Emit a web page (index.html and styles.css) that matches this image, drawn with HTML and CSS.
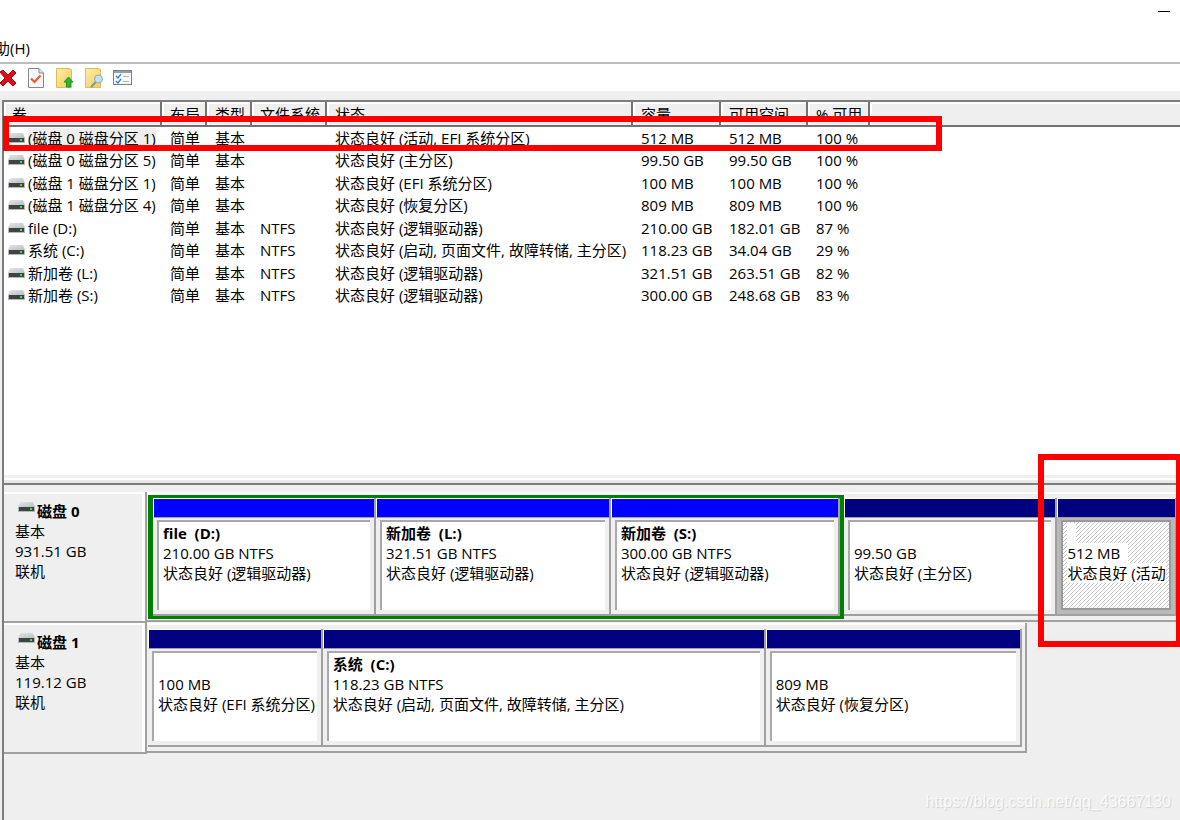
FILE: index.html
```html
<!DOCTYPE html>
<html lang="zh-CN">
<head>
<meta charset="utf-8">
<title>磁盘管理</title>
<link rel="stylesheet" href="styles.css">
</head>
<body>
<svg class="defs" aria-hidden="true">
  <defs>
    <linearGradient id="lid" x1="0" y1="0" x2="1" y2="1"><stop offset="0" stop-color="#e4e6e9"/><stop offset="1" stop-color="#b9bdc3"/></linearGradient>
    <linearGradient id="folder" x1="0" y1="0" x2="1" y2="1"><stop offset="0" stop-color="#ffedab"/><stop offset="1" stop-color="#f2cc58"/></linearGradient>
    <symbol id="drive" viewBox="0 0 17 12">
      <path d="M2 1H15L17 6H0Z" fill="url(#lid)"/>
      <rect y="6" width="17" height="5" fill="#b4b7bb"/>
      <rect x="1" y="6" width="15" height="4" fill="#404244"/>
      <rect x="12" y="7" width="2" height="2" fill="#35e63c"/>
    </symbol>
  </defs>
</svg>
<header class="titlebar"><button class="minimize" aria-label="最小化"></button></header>
<nav class="menubar"><button class="menu">助(H)</button></nav>
<div class="toolbar">
  <button class="tool" aria-label="删除"><svg width="20" height="22" viewBox="0 0 20 22"><path d="M3 5L6 3L11 8L16 3L19 6L14 11L19 16L16 19L11 14L6 19L3 16L8 11Z" fill="#dc1018" stroke="#b5000c"/></svg></button>
  <button class="tool" aria-label="属性"><svg width="20" height="22" viewBox="0 0 20 22"><path d="M2.500 1.500H13L17.500 6V20.500H2.500Z" fill="#f5f7f9" stroke="#85898d"/><path d="M13 1.500V6H17.500" fill="#dfe3e8" stroke="#85898d"/><path d="M5 11.500L8.500 15L14.500 8.500" fill="none" stroke="#f05a28" stroke-width="2.200"/></svg></button>
  <button class="tool" aria-label="向上"><svg width="20" height="22" viewBox="0 0 20 22"><path d="M1.500 1.500H14L16.500 2.500V20.500H1.500Z" fill="url(#folder)" stroke="#dfbd58"/><path d="M13.500 10L18 15H15.500V20H11.500V15H9Z" fill="#2db52d" stroke="#179622"/></svg></button>
  <button class="tool" aria-label="查找"><svg width="20" height="22" viewBox="0 0 20 22"><path d="M1.500 1.500H14L16.500 2.500V20.500H1.500Z" fill="url(#folder)" stroke="#dfbd58"/><path d="M12 15L7 20" stroke="#7993a8" stroke-width="2"/><circle cx="14.500" cy="12" r="4" fill="#bfe2f4" stroke="#8da8bb"/></svg></button>
  <button class="tool" aria-label="视图"><svg width="20" height="22" viewBox="0 0 20 22"><rect x=".5" y="3.500" width="18" height="14" fill="#f7f8f9" stroke="#797f87"/><rect x="1" y="4" width="17" height="2" fill="#979da5"/><path d="M3 9L5 11L8 7M3 14L5 16L8 12" fill="none" stroke="#3083d4" stroke-width="1.300"/><path d="M10 9.500H16M10 14.500H16" stroke="#b0b4b8"/></svg></button>
</div>
<main class="workspace">
  <section class="volumes">
    <table>
      <colgroup><col class="c-name"><col class="c-short"><col class="c-short"><col class="c-fs"><col class="c-status"><col class="c-cap"><col class="c-free"><col class="c-pct"><col></colgroup>
      <thead><tr><th>卷</th><th>布局</th><th>类型</th><th>文件系统</th><th>状态</th><th>容量</th><th>可用空间</th><th>% 可用</th><th></th></tr></thead>
      <tbody>
        <tr><td><div class="name"><svg><use href="#drive"/></svg><span class="picked">(磁盘 0 磁盘分区 1)</span></div></td><td>简单</td><td>基本</td><td></td><td>状态良好 (活动, EFI 系统分区)</td><td>512 MB</td><td>512 MB</td><td>100 %</td><td></td></tr>
        <tr><td><div class="name"><svg><use href="#drive"/></svg><span>(磁盘 0 磁盘分区 5)</span></div></td><td>简单</td><td>基本</td><td></td><td>状态良好 (主分区)</td><td>99.50 GB</td><td>99.50 GB</td><td>100 %</td><td></td></tr>
        <tr><td><div class="name"><svg><use href="#drive"/></svg><span>(磁盘 1 磁盘分区 1)</span></div></td><td>简单</td><td>基本</td><td></td><td>状态良好 (EFI 系统分区)</td><td>100 MB</td><td>100 MB</td><td>100 %</td><td></td></tr>
        <tr><td><div class="name"><svg><use href="#drive"/></svg><span>(磁盘 1 磁盘分区 4)</span></div></td><td>简单</td><td>基本</td><td></td><td>状态良好 (恢复分区)</td><td>809 MB</td><td>809 MB</td><td>100 %</td><td></td></tr>
        <tr><td><div class="name"><svg><use href="#drive"/></svg><span>file (D:)</span></div></td><td>简单</td><td>基本</td><td>NTFS</td><td>状态良好 (逻辑驱动器)</td><td>210.00 GB</td><td>182.01 GB</td><td>87 %</td><td></td></tr>
        <tr><td><div class="name"><svg><use href="#drive"/></svg><span>系统 (C:)</span></div></td><td>简单</td><td>基本</td><td>NTFS</td><td>状态良好 (启动, 页面文件, 故障转储, 主分区)</td><td>118.23 GB</td><td>34.04 GB</td><td>29 %</td><td></td></tr>
        <tr><td><div class="name"><svg><use href="#drive"/></svg><span>新加卷 (L:)</span></div></td><td>简单</td><td>基本</td><td>NTFS</td><td>状态良好 (逻辑驱动器)</td><td>321.51 GB</td><td>263.51 GB</td><td>82 %</td><td></td></tr>
        <tr><td><div class="name"><svg><use href="#drive"/></svg><span>新加卷 (S:)</span></div></td><td>简单</td><td>基本</td><td>NTFS</td><td>状态良好 (逻辑驱动器)</td><td>300.00 GB</td><td>248.68 GB</td><td>83 %</td><td></td></tr>
      </tbody>
    </table>
    <div class="mark mark-row"></div>
  </section>
  <div class="splitter"></div>
  <section class="disks">
    <article class="disk">
      <div class="disk-label"><h2><svg><use href="#drive"/></svg>磁盘 0</h2><p>基本</p><p>931.51 GB</p><p>联机</p></div>
      <div class="track">
        <div class="extended" style="flex-grow:695">
          <div class="part logical" style="flex-grow:223"><div class="bar"></div><div class="info"><b>file&nbsp; (D:)</b><span>210.00 GB NTFS</span><span>状态良好 (逻辑驱动器)</span></div></div>
          <div class="part logical" style="flex-grow:235"><div class="bar"></div><div class="info"><b>新加卷&nbsp; (L:)</b><span>321.51 GB NTFS</span><span>状态良好 (逻辑驱动器)</span></div></div>
          <div class="part logical" style="flex-grow:229"><div class="bar"></div><div class="info"><b>新加卷&nbsp; (S:)</b><span>300.00 GB NTFS</span><span>状态良好 (逻辑驱动器)</span></div></div>
        </div>
        <div class="part" style="flex-grow:214"><div class="bar"></div><div class="info"><b>&nbsp;</b><span>99.50 GB</span><span>状态良好 (主分区)</span></div></div>
        <div class="part selected" style="flex-grow:119"><div class="bar"></div><div class="info"><b>&nbsp;</b><span>512 MB&nbsp;&nbsp;</span><span>状态良好 (活动</span></div></div>
      </div>
      <div class="mark mark-part"></div>
    </article>
    <article class="disk second">
      <div class="disk-label"><h2><svg><use href="#drive"/></svg>磁盘 1</h2><p>基本</p><p>119.12 GB</p><p>联机</p></div>
      <div class="track">
        <div class="part" style="flex-grow:174"><div class="bar"></div><div class="info"><b>&nbsp;</b><span>100 MB</span><span>状态良好 (EFI 系统分区)</span></div></div>
        <div class="part" style="flex-grow:444"><div class="bar"></div><div class="info"><b>系统&nbsp; (C:)</b><span>118.23 GB NTFS</span><span>状态良好 (启动, 页面文件, 故障转储, 主分区)</span></div></div>
        <div class="part" style="flex-grow:256"><div class="bar"></div><div class="info"><b>&nbsp;</b><span>809 MB</span><span>状态良好 (恢复分区)</span></div></div>
      </div>
      <div class="rest"></div>
    </article>
  </section>
</main>
<div class="watermark">https://blog.csdn.net/qq_43667130</div>
</body>
</html>
```

FILE: styles.css
```css
* { box-sizing: border-box; }
body {
  margin: 0;
  height: 100vh;
  display: flex;
  flex-direction: column;
  position: relative;
  overflow: hidden;
  background: #fff;
  color: #000;
  font: 15px/20px "Open Sans", "Noto Sans CJK SC", sans-serif;
}
button { border: 0; padding: 0; background: none; color: inherit; font: inherit; }
.defs { position: absolute; width: 0; height: 0; }

.titlebar { display: flex; justify-content: flex-end; height: 38px; padding: 11px 10px 0 0; }
.minimize { width: 12px; height: 1px; background: #000; }
.menubar { height: 26px; border-bottom: 2px solid #bcbebe; }
.menu { display: block; margin-left: -5px; }
.toolbar { display: flex; align-items: center; gap: 9px; height: 27px; margin-left: -3px; }
.tool { width: 20px; height: 22px; }
.tool svg { display: block; }

.workspace {
  flex: 1;
  min-height: 0;
  display: flex;
  flex-direction: column;
  padding: 9px 0 0 2px;
  background: #efefef;
}
.volumes {
  flex: 0 0 375px;
  position: relative;
  border-left: 2px solid #7d7d7d;
  border-top: 2px solid #7d7d7d;
  background: #fff;
}
table { width: 100%; table-layout: fixed; border-collapse: separate; border-spacing: 0; }
.c-name { width: 158px; }
.c-short { width: 45px; }
.c-fs { width: 75px; }
.c-status { width: 306px; }
.c-cap { width: 88px; }
.c-free { width: 87px; }
.c-pct { width: 62px; }
th, td { padding: 0 0 0 8px; text-align: left; font-weight: 400; white-space: nowrap; }
th {
  height: 25px;
  background: #efefef;
  border: solid #727272;
  border-width: 0 2px 2px 0;
  box-shadow: inset 2px 2px #fff;
}
th:last-child { border-right: 0; }
td { height: 23px; padding-bottom: 2px; }
tr:nth-child(even) td { height: 22px; }
td:first-child { padding-left: 4px; }
.name { display: flex; align-items: center; gap: 3px; }
.name svg, h2 svg { width: 17px; height: 12px; flex: none; }
.name .picked { background: #efefef; }

.splitter {
  flex: 0 0 10px;
  border-left: 2px solid #7d7d7d;
  border-bottom: 2px solid #7d7d7d;
  background: linear-gradient(#efefef 3px, #fff 3px 5px, #e8e8e8 5px);
}
.disks { flex: 1; padding-top: 7px; border-left: 2px solid #7d7d7d; }
.disk { display: flex; position: relative; height: 131px; }
.disk-label {
  flex: 0 0 143px;
  height: 131px;
  padding: 9px 0 0 11px;
  border: solid #a0a0a0;
  border-width: 0 2px 2px 0;
  box-shadow: inset 0 2px #fff, inset -3px 0 #fff;
}
h2 { display: flex; gap: 2px; margin: 0 0 0 3px; font-size: 15px; line-height: 20px; }
p { margin: 0; }
.track {
  flex: 1;
  min-width: 0;
  display: flex;
  height: 130px;
  padding: 3px 3px 1px 1px;
  border-bottom: 2px solid #a0a0a0;
  box-shadow: inset 0 2px #fff;
}
.second .track { flex: 879; padding: 6px 3px 4px 1px; border-right: 2px solid #a0a0a0; }
.rest { flex: 154; }
.extended {
  flex: 1 1 0;
  min-width: 0;
  display: flex;
  border: solid #008000;
  border-width: 3px 4px 3px 5px;
}
.part {
  flex: 1 1 0;
  min-width: 0;
  display: flex;
  flex-direction: column;
  border: solid #a0a0a0;
  border-width: 0 2px 2px 0;
  background: #efefef;
}
.track > .part { margin-top: 3px; margin-bottom: 3px; }
.second .track > .part { margin: 0; }
.bar {
  flex: 0 0 20px;
  border: solid #fff;
  border-width: 1px 0 0 1px;
  border-bottom: 1px solid #a0a0a0;
  background: #000080;
}
.logical .bar { background: #0000ff; }
.info {
  flex: 1;
  min-height: 0;
  display: flex;
  flex-direction: column;
  align-items: flex-start;
  margin: 2px 4px 4px 4px;
  padding: 1px 0 0 4px;
  border: solid #a9a9a9;
  border-width: 2px 0 0 2px;
  background: #fff;
  overflow: hidden;
  white-space: nowrap;
}
.selected { background: #b9b9b9; }
.selected .info {
  border: 2px solid #999;
  background: linear-gradient(135deg, #fff 40%, #c4c4c4 40% 60%, #fff 60%) 0 0 / 4px 4px;
}
.selected .info > * { min-width: 9px; background: #fff; }

.mark { position: absolute; border: 6px solid #f00; pointer-events: none; }
.mark-row { left: -1px; top: 14px; width: 939px; height: 35px; }
.mark-part { right: 0; top: -38px; width: 142px; height: 193px; border-right-width: 4px; }
.watermark {
  position: absolute;
  right: 9px;
  bottom: 9px;
  color: #fafafa;
  font: 16px/18px "Liberation Sans", sans-serif;
  text-shadow: 1px 1px 1px #d0d0d0;
}
```
